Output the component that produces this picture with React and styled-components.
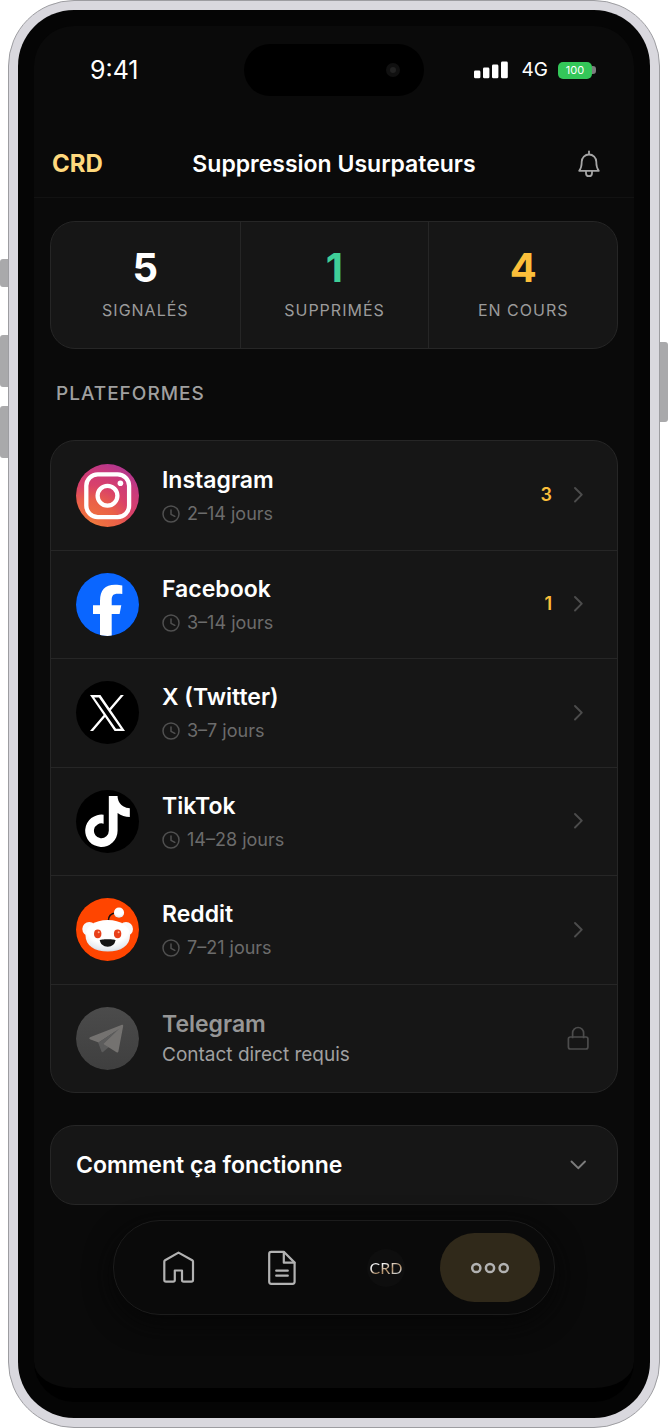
import { useState } from "react"
import styled, { createGlobalStyle } from "styled-components"
import { FaTiktok } from "react-icons/fa6"

const GlobalStyle = createGlobalStyle`
  * {
    box-sizing: border-box;
  }
  body {
    margin: 0;
    background: #ffffff;
    color: #ffffff;
    font-family: Inter, "Liberation Sans", sans-serif;
  }
  button {
    margin: 0;
    padding: 0;
    border: 0;
    background: none;
    color: inherit;
    font: inherit;
    text-align: left;
    cursor: pointer;
  }
  h1, h2, p {
    margin: 0;
  }
  svg {
    display: block;
    flex-shrink: 0;
  }
`

const Device = styled.div`
  display: grid;
  grid-template-columns: 8px minmax(0, 1fr) 8px;
`

const SideKeys = styled.div`
  display: flex;
  flex-direction: column;
  padding-top: ${({ $top }) => $top}px;
`

const SideKey = styled.span`
  height: ${({ $height }) => $height}px;
  margin-bottom: ${({ $after }) => $after || 0}px;
  border-radius: ${({ $right }) => ($right ? "0 3px 3px 0" : "3px 0 0 3px")};
  background: #a9a9ab;
`

const Frame = styled.div`
  padding: 9px;
  border: 1px solid #9d9da1;
  border-radius: 66px;
  background: #d9d8de;
`

const Bezel = styled.div`
  padding: 16px;
  border-radius: 56px;
  background: #050505;
`

const Screen = styled.div`
  display: flex;
  flex-direction: column;
  border-radius: 40px;
  border-bottom: 14px solid #000000;
  background: #0a0a0a;
  overflow: hidden;
`

const StatusBar = styled.div`
  display: grid;
  grid-template-columns: 1fr 180px 1fr;
  align-items: center;
  padding: 18px 38px 0 56px;
`

const Time = styled.span`
  font-size: 25px;
  line-height: 30px;
`

const Island = styled.div`
  display: flex;
  align-items: center;
  justify-content: flex-end;
  height: 52px;
  margin-left: -9px;
  margin-right: 9px;
  padding-right: 24px;
  border-radius: 26px;
  background: #000000;
`

const Camera = styled.span`
  width: 14px;
  height: 14px;
  border: 4px solid #101010;
  border-radius: 50%;
  background: #222222;
`

const Indicators = styled.div`
  display: flex;
  align-items: center;
  justify-content: flex-end;
`

const Network = styled.span`
  margin: 0 10px 0 14px;
  font-size: 19px;
  line-height: 24px;
`

const Battery = styled.span`
  width: 34px;
  border-radius: 5px;
  background: #34c759;
  font-size: 11px;
  line-height: 17px;
  text-align: center;
`

const BatteryTip = styled.span`
  width: 4px;
  height: 8px;
  border-radius: 0 3px 3px 0;
  background: #7c7c7e;
`

const Header = styled.header`
  display: grid;
  grid-template-columns: 1fr auto 1fr;
  align-items: center;
  height: 68px;
  margin-top: 34px;
  padding: 0 18px;
  border-bottom: 1px solid #121212;
`

const Brand = styled.a`
  color: #ffd97d;
  font-size: 24px;
  font-weight: 700;
  line-height: 30px;
  text-decoration: none;
`

const Title = styled.h1`
  font-size: 23px;
  font-weight: 600;
  line-height: 30px;
`

const BellButton = styled.button`
  display: grid;
  justify-self: end;
  place-items: center;
  width: 54px;
  height: 44px;
`

const Content = styled.main`
  display: flex;
  flex-direction: column;
  padding: 23px 16px 0;
`

const Card = styled.section`
  border: 1px solid #262626;
  border-radius: 25px;
  background: #161616;
  overflow: hidden;
`

const Stats = styled(Card)`
  display: grid;
  grid-template-columns: repeat(3, 1fr);
`

const Stat = styled.div`
  display: flex;
  flex-direction: column;
  align-items: center;
  gap: 6px;
  padding: 22px 0 26px;
  & + & {
    border-left: 1px solid #262626;
  }
`

const StatValue = styled.strong`
  color: ${({ $color }) => $color};
  font-size: 40px;
  font-weight: 700;
  line-height: 48px;
`

const StatLabel = styled.span`
  color: #9b9b9b;
  font-size: 16px;
  letter-spacing: 1px;
  line-height: 24px;
`

const SectionTitle = styled.h2`
  margin: 33px 6px 34px;
  color: #a0a0a0;
  font-size: 19px;
  font-weight: 500;
  letter-spacing: 1px;
  line-height: 24px;
`

const PlatformList = styled(Card)`
  display: grid;
  grid-auto-rows: 1fr;
  min-height: 653px;
`

const PlatformRow = styled.button`
  display: flex;
  align-items: center;
  gap: 23px;
  padding: 0 27px 0 25px;
  & + & {
    border-top: 1px solid #262626;
  }
`

const PlatformText = styled.span`
  display: flex;
  flex: 1;
  flex-direction: column;
  gap: ${({ $locked }) => ($locked ? 4 : 7)}px;
`

const PlatformName = styled.span`
  color: ${({ $locked }) => ($locked ? "#969696" : "#ffffff")};
  font-size: 23px;
  font-weight: 600;
  line-height: 30px;
`

const Delay = styled.span`
  display: flex;
  align-items: center;
  gap: 7px;
  color: #6c6c6c;
  font-size: 18px;
  line-height: 24px;
`

const Notice = styled.span`
  color: #a0a0a0;
  font-size: 19px;
  line-height: 24px;
`

const Trailing = styled.span`
  display: flex;
  align-items: center;
  gap: 14px;
  color: #4c4c4c;
`

const Count = styled.span`
  color: #fbbf3a;
  font-size: 18px;
  font-weight: 600;
  line-height: 24px;
`

const Disclosure = styled(Card)`
  margin-top: 32px;
`

const DisclosureButton = styled.button`
  display: flex;
  align-items: center;
  justify-content: space-between;
  width: 100%;
  height: 78px;
  padding: 0 27px 0 25px;
  color: #7c7c7c;
`

const DisclosureTitle = styled.span`
  color: #ffffff;
  font-size: 23px;
  font-weight: 600;
  line-height: 30px;
`

const DisclosureBody = styled.p`
  padding: 0 25px 25px;
  color: #a0a0a0;
  font-size: 18px;
  line-height: 24px;
`

const TabBar = styled.nav`
  display: flex;
  align-self: center;
  gap: 4px;
  margin: 15px 0 73px;
  padding: 12px 14px;
  border: 1px solid #1c1c1c;
  border-radius: 47px;
  background: #0a0a0a;
  box-shadow: 0 8px 28px #060606;
`

const Tab = styled.a`
  display: grid;
  place-items: center;
  width: 100px;
  height: 69px;
  border-radius: 35px;
  background: ${({ $active }) => ($active ? "#30291a" : "none")};
  color: #b2b2b2;
  text-decoration: none;
`

const Monogram = styled.span`
  display: grid;
  place-items: center;
  width: 38px;
  height: 38px;
  border-radius: 50%;
  background: #0e0e0e;
`

const MonogramText = styled.span`
  background: linear-gradient(160deg, #f2f2f2 35%, #b08a60 60%, #d0d0d0 80%);
  background-clip: text;
  color: transparent;
  font-family: Lato, sans-serif;
  font-size: 16px;
  font-weight: 400;
  line-height: 20px;
`

const LogoDisc = styled.span`
  display: grid;
  flex-shrink: 0;
  place-items: center;
  width: 63px;
  height: 63px;
  border-radius: 50%;
  background: #000000;
  overflow: hidden;
`

const SignalIcon = () => (
  <svg width="34" height="18" viewBox="0 0 34 18" fill="#ffffff" aria-hidden="true">
    <rect x="0" y="9.5" width="6.4" height="7.8" rx="1.4" />
    <rect x="9" y="6.5" width="6.4" height="10.8" rx="1.4" />
    <rect x="18" y="3.5" width="6.4" height="13.8" rx="1.4" />
    <rect x="27" y="0.5" width="6.8" height="16.8" rx="1.4" />
  </svg>
)

const BellIcon = () => (
  <svg width="24" height="28" viewBox="0 0 24 28" fill="none" stroke="#a6a6a6" strokeWidth="1.8" strokeLinecap="round" strokeLinejoin="round" aria-hidden="true">
    <path d="M12 1.5v2.3" />
    <path d="M2.200 20.800c2-2.400 2.500-5 2.500-9a7.300 7.300 0 0 1 14.600 0c0 4 .5 6.600 2.500 9z" />
    <path d="M9 21v2.200a3 3 0 0 0 6 0V21" />
  </svg>
)

const ClockIcon = () => (
  <svg width="18" height="18" viewBox="0 0 18 18" fill="none" stroke="#505050" strokeWidth="1.5" strokeLinecap="round" strokeLinejoin="round" aria-hidden="true">
    <circle cx="9" cy="9" r="8" />
    <path d="M9 5v4.300l3.800 2" />
  </svg>
)

const ChevronRight = () => (
  <svg width="24" height="24" viewBox="0 0 24 24" fill="none" stroke="currentColor" strokeWidth="1.9" strokeLinecap="round" strokeLinejoin="round" aria-hidden="true">
    <path d="M9 5 15.800 11.700 9 18.500" />
  </svg>
)

const ChevronDown = () => (
  <svg width="24" height="24" viewBox="0 0 24 24" fill="none" stroke="currentColor" strokeWidth="1.9" strokeLinecap="round" strokeLinejoin="round" aria-hidden="true">
    <path d="M5.500 8.500 12.200 15.200 19 8.500" />
  </svg>
)

const LockIcon = () => (
  <svg width="24" height="24" viewBox="0 0 24 24" fill="none" stroke="currentColor" strokeWidth="1.700" strokeLinejoin="round" aria-hidden="true">
    <rect x="2.400" y="11" width="19.500" height="12" rx="2" />
    <path d="M6.600 12.200V7a5.500 5.500 0 0 1 11 0v5.200" />
  </svg>
)

const HomeIcon = () => (
  <svg width="33" height="36" viewBox="0 0 33 36" fill="none" stroke="currentColor" strokeWidth="2.200" strokeLinejoin="round" aria-hidden="true">
    <path d="M16.500 2.600 30.200 10.200q.8.500.8 1.400V30q0 1.700-1.700 1.700h-7.600q-1.700 0-1.700-1.700v-9.500h-7.200V30q0 1.700-1.700 1.700H4q-1.700 0-1.700-1.700V11.600q0-.9.8-1.400z" />
  </svg>
)

const DocumentIcon = () => (
  <svg width="32" height="36" viewBox="0 0 32 36" fill="none" stroke="currentColor" strokeWidth="2.200" strokeLinecap="round" strokeLinejoin="round" aria-hidden="true">
    <path d="M5.200 1.800H17.800L28.600 12.600V31.800q0 2-2 2H5.200q-2 0-2-2v-28q0-2 2-2z" />
    <path d="M17.800 2v10.700h10.600" />
    <path d="M10.200 20.700h11.600M10.200 25.700h11.600" />
  </svg>
)

const MoreIcon = () => (
  <svg width="40" height="12" viewBox="0 0 40 12" fill="none" stroke="currentColor" strokeWidth="2.500" aria-hidden="true">
    <circle cx="6.300" cy="6" r="4.100" />
    <circle cx="20" cy="6" r="4.100" />
    <circle cx="33.700" cy="6" r="4.100" />
  </svg>
)

const InstagramLogo = () => (
  <svg width="63" height="63" viewBox="0 0 63 63" aria-hidden="true">
    <defs>
      <radialGradient id="instagram" cx="0.2" cy="1.08" r="1.2">
        <stop offset="0" stopColor="#f59a3c" />
        <stop offset="0.18" stopColor="#ee7040" />
        <stop offset="0.42" stopColor="#ea6048" />
        <stop offset="0.62" stopColor="#d9416a" />
        <stop offset="0.82" stopColor="#c93a7c" />
        <stop offset="1" stopColor="#ab3694" />
      </radialGradient>
    </defs>
    <rect width="63" height="63" fill="url(#instagram)" />
    <g fill="none" stroke="#ffffff" strokeWidth="4.300">
      <rect x="10.300" y="10.300" width="42.800" height="42.800" rx="11.500" />
      <circle cx="31.500" cy="31.700" r="9.900" />
    </g>
    <circle cx="44.400" cy="19.300" r="2.800" fill="#ffffff" />
  </svg>
)

const FacebookLogo = () => (
  <svg width="63" height="63" viewBox="0 0 63 63" aria-hidden="true">
    <rect width="63" height="63" fill="#0a66ff" />
    <path fill="#ffffff" d="M24 63V41h-7v-8.700h7v-4.500C24 16.800 29 11.700 39 11.700c3 0 5.500.2 7.300.7V21c-1.200-.1-2.800-.2-4.600-.2-4.500 0-6 2-6 6.200v5.300h9.600L43.600 41h-7.900v22z" />
  </svg>
)

const XLogo = () => (
  <svg width="35" height="36" viewBox="0 0 1200 1227" fill="#ffffff" aria-hidden="true">
    <path d="M714.163 519.284L1160.890 0H1055.030L667.137 450.887L357.328 0H0L468.492 681.821L0 1226.370H105.866L515.491 750.218L842.672 1226.370H1200L714.137 519.284H714.163ZM569.165 687.828L521.697 619.934L144.011 79.694H306.615L611.412 515.685L658.880 583.579L1055.080 1150.300H892.476L569.165 687.854V687.828Z" />
  </svg>
)

const RedditLogo = () => (
  <svg width="63" height="63" viewBox="0 0 63 63" aria-hidden="true">
    <defs>
      <radialGradient id="snoo" cx="0.5" cy="0.25" r="0.8">
        <stop offset="0.6" stopColor="#ffffff" />
        <stop offset="0.85" stopColor="#e6eaef" />
        <stop offset="1" stopColor="#c4cdd6" />
      </radialGradient>
    </defs>
    <rect width="63" height="63" fill="#ff4500" />
    <path d="M32.300 23c0-5 2.700-7.800 7.700-8.300" fill="none" stroke="#1a1010" strokeWidth="1.600" />
    <circle cx="43" cy="14.700" r="5.100" fill="url(#snoo)" />
    <circle cx="13.300" cy="31" r="7" fill="#f8f9fb" />
    <circle cx="50" cy="31" r="7" fill="#f8f9fb" />
    <path d="M31.800 22C45 22 54 28.500 54 37.500 54 47.500 45 53.600 31.800 53.600S9.500 47.500 9.500 37.500C9.500 28.500 18.500 22 31.800 22z" fill="url(#snoo)" />
    <ellipse cx="21.700" cy="35.800" rx="3.700" ry="4.400" fill="#e8401a" />
    <ellipse cx="41.600" cy="35.800" rx="3.700" ry="4.400" fill="#e8401a" />
    <circle cx="22.700" cy="34.200" r="1" fill="#ffb093" />
    <circle cx="42.600" cy="34.200" r="1" fill="#ffb093" />
    <path d="M24 42.300c0-.7 3-1 7.700-1s7.600.3 7.600 1c0 3.700-3.300 6.400-7.600 6.400S24 46 24 42.300z" fill="#141414" />
  </svg>
)

const TelegramLogo = () => (
  <svg width="63" height="63" viewBox="0 0 63 63" aria-hidden="true">
    <defs>
      <linearGradient id="telegram" x1="0" y1="0" x2="0" y2="1">
        <stop offset="0" stopColor="#4b4b4b" />
        <stop offset="1" stopColor="#3f3f3f" />
      </linearGradient>
    </defs>
    <rect width="63" height="63" fill="url(#telegram)" />
    <path d="M22 35.200 25.500 44.600q.5 1 1.500.3L33 40 28 36z" fill="#5c5c5c" />
    <path d="M14 30.300 46 17.800q1.400-.3 1.200 1.200L42.400 44.500q-.4 1.600-1.900.7L27 36.800 40 24 22.600 35.500 13.900 32.200q-1.500-.9.100-1.900z" fill="#747270" />
    <path d="M22.600 35.500 43.500 21.500 27.600 36.800 26.200 44.500z" fill="#5c5c5c" />
  </svg>
)

const stats = [
  { value: 5, label: "SIGNALÉS", color: "#ffffff" },
  { value: 1, label: "SUPPRIMÉS", color: "#3fcf98" },
  { value: 4, label: "EN COURS", color: "#fbbf3a" },
]

const platforms = [
  { name: "Instagram", delay: "2–14 jours", count: 3, logo: <InstagramLogo /> },
  { name: "Facebook", delay: "3–14 jours", count: 1, logo: <FacebookLogo /> },
  { name: "X (Twitter)", delay: "3–7 jours", logo: <XLogo /> },
  { name: "TikTok", delay: "14–28 jours", logo: <FaTiktok size={51} /> },
  { name: "Reddit", delay: "7–21 jours", logo: <RedditLogo /> },
  { name: "Telegram", locked: true, logo: <TelegramLogo /> },
]

const Platform = ({ name, delay, count, locked, logo }) => (
  <PlatformRow type="button">
    <LogoDisc>{logo}</LogoDisc>
    <PlatformText $locked={locked}>
      <PlatformName $locked={locked}>{name}</PlatformName>
      {locked ? (
        <Notice>Contact direct requis</Notice>
      ) : (
        <Delay>
          <ClockIcon />
          {delay}
        </Delay>
      )}
    </PlatformText>
    <Trailing>
      {count && <Count>{count}</Count>}
      {locked ? <LockIcon /> : <ChevronRight />}
    </Trailing>
  </PlatformRow>
)

const App = () => {
  const [open, setOpen] = useState(false)

  return (
    <Device>
      <GlobalStyle />
      <SideKeys $top={259}>
        <SideKey $height={28} $after={48} />
        <SideKey $height={52} $after={19} />
        <SideKey $height={52} />
      </SideKeys>
      <Frame>
        <Bezel>
          <Screen>
            <StatusBar>
              <Time>9:41</Time>
              <Island>
                <Camera />
              </Island>
              <Indicators>
                <SignalIcon />
                <Network>4G</Network>
                <Battery>100</Battery>
                <BatteryTip />
              </Indicators>
            </StatusBar>

            <Header>
              <Brand href="#accueil">CRD</Brand>
              <Title>Suppression Usurpateurs</Title>
              <BellButton type="button" aria-label="Notifications">
                <BellIcon />
              </BellButton>
            </Header>

            <Content>
              <Stats>
                {stats.map((stat) => (
                  <Stat key={stat.label}>
                    <StatValue $color={stat.color}>{stat.value}</StatValue>
                    <StatLabel>{stat.label}</StatLabel>
                  </Stat>
                ))}
              </Stats>

              <SectionTitle>PLATEFORMES</SectionTitle>
              <PlatformList>
                {platforms.map((platform) => (
                  <Platform key={platform.name} {...platform} />
                ))}
              </PlatformList>

              <Disclosure>
                <DisclosureButton type="button" aria-expanded={open} onClick={() => setOpen(!open)}>
                  <DisclosureTitle>Comment ça fonctionne</DisclosureTitle>
                  <ChevronDown />
                </DisclosureButton>
                {open && (
                  <DisclosureBody>Choisissez une plateforme pour signaler un compte.</DisclosureBody>
                )}
              </Disclosure>

              <TabBar>
                <Tab href="#accueil" aria-label="Accueil">
                  <HomeIcon />
                </Tab>
                <Tab href="#dossiers" aria-label="Dossiers">
                  <DocumentIcon />
                </Tab>
                <Tab href="#crd">
                  <Monogram>
                    <MonogramText>CRD</MonogramText>
                  </Monogram>
                </Tab>
                <Tab href="#plus" aria-label="Plus" $active>
                  <MoreIcon />
                </Tab>
              </TabBar>
            </Content>
          </Screen>
        </Bezel>
      </Frame>
      <SideKeys $top={342}>
        <SideKey $height={80} $right />
      </SideKeys>
    </Device>
  )
}

export default App
